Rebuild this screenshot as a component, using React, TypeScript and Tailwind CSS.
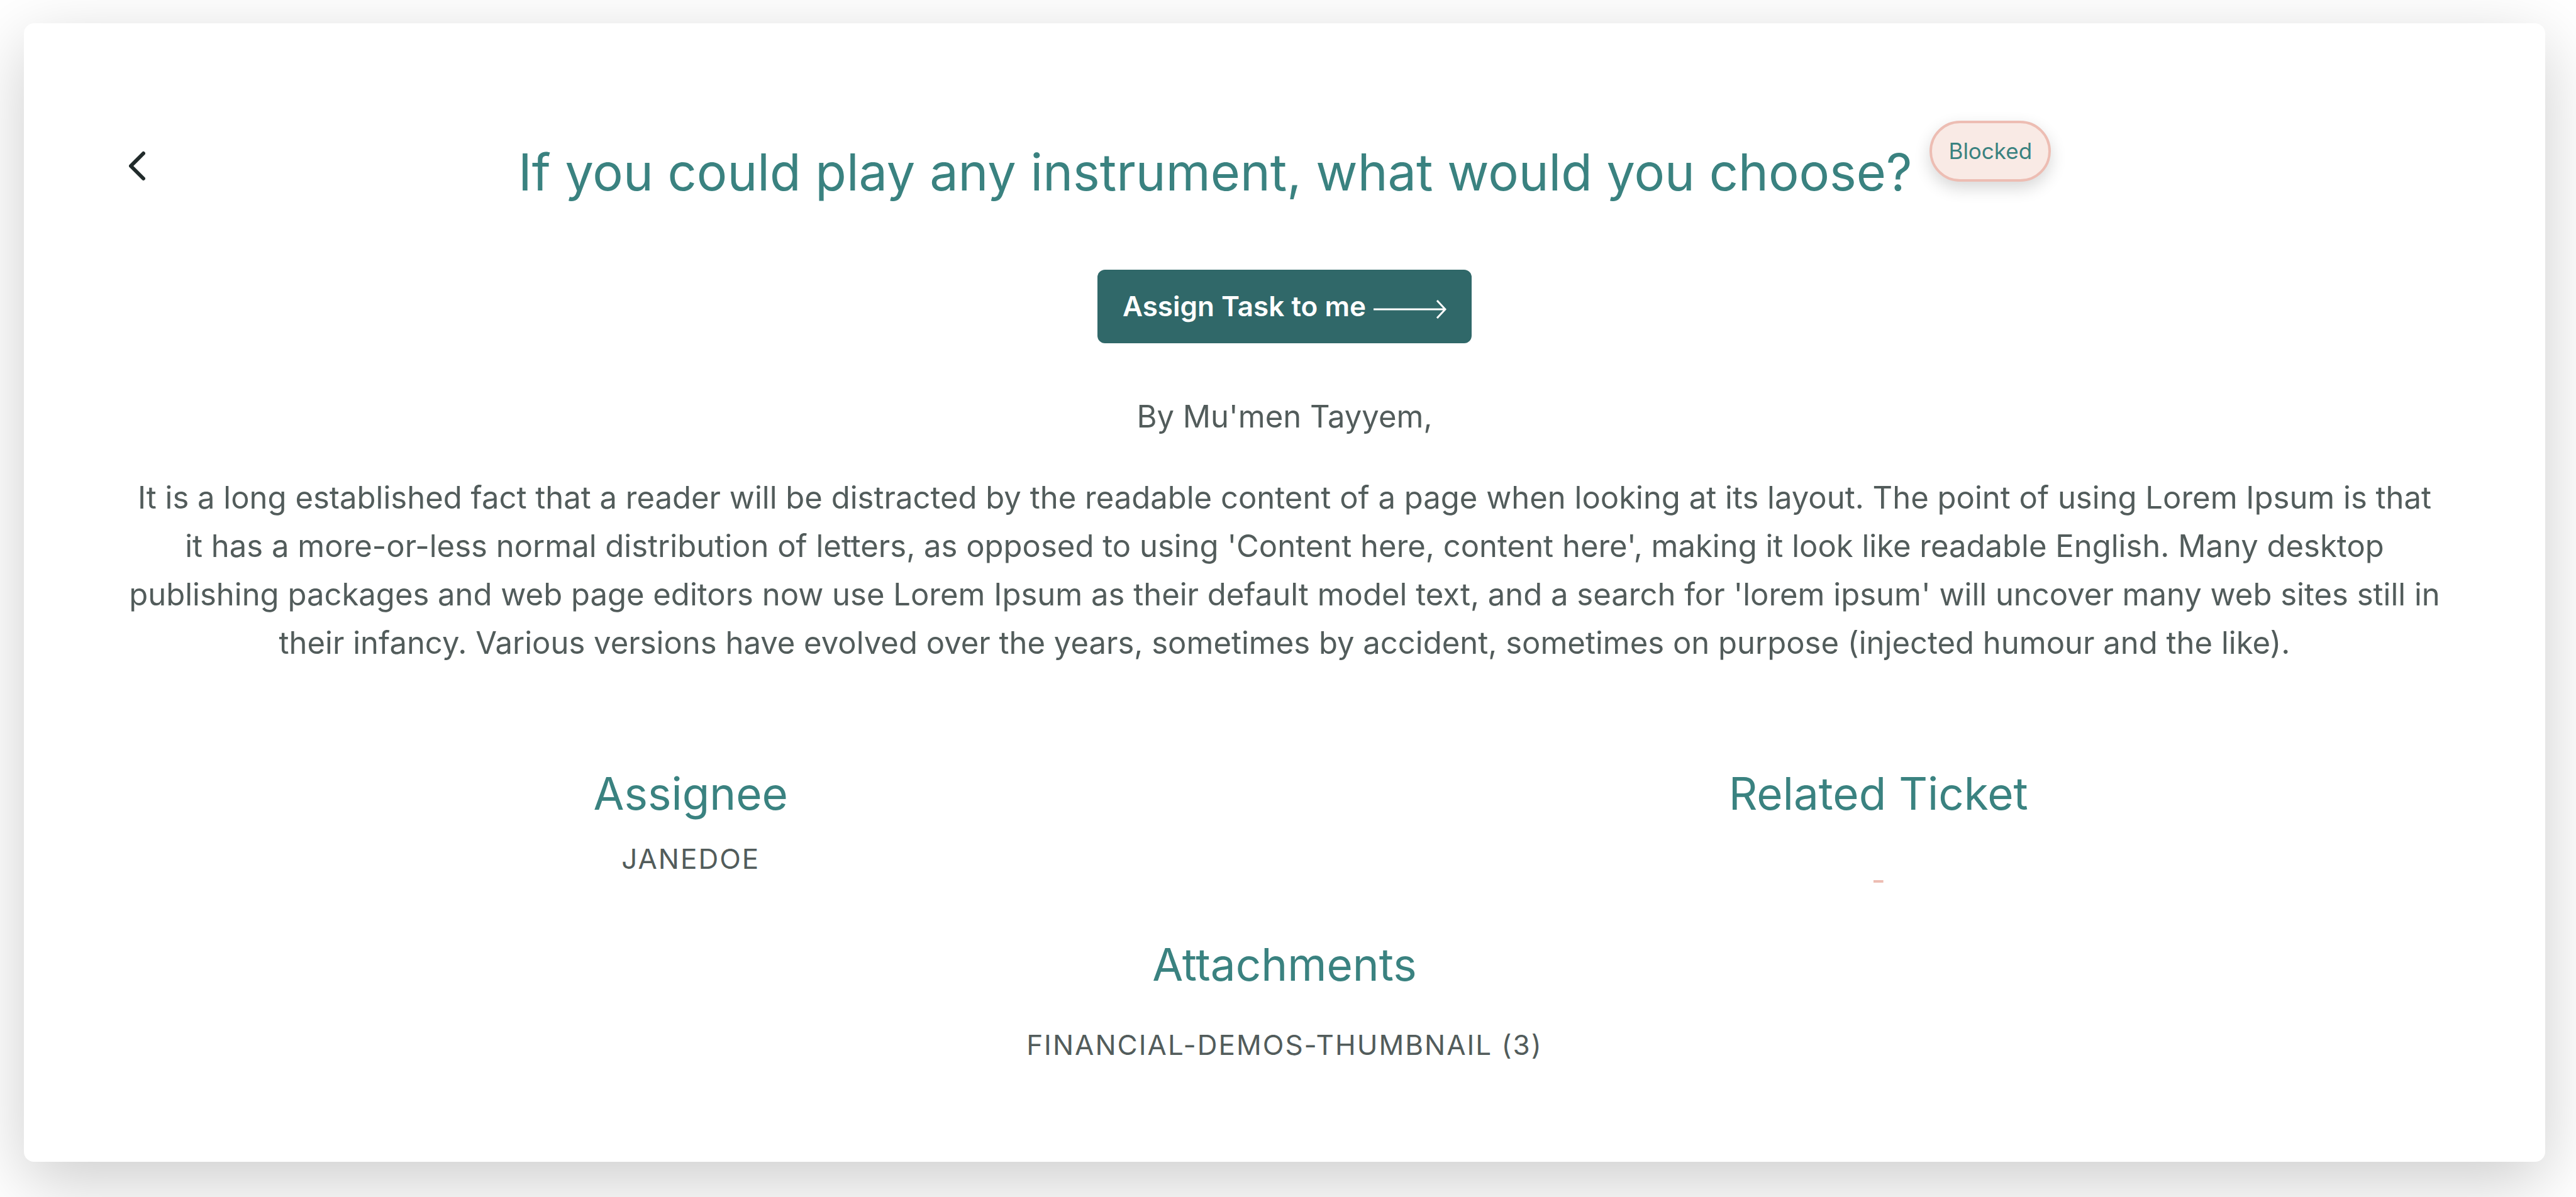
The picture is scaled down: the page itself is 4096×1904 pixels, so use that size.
import type { ReactNode } from "react";

function SectionHeading({ children }: { children: ReactNode }) {
  return (
    <h2 className="text-[71px] leading-[96px] font-normal text-[#3a8280]">
      {children}
    </h2>
  );
}

function ChevronLeft() {
  return (
    <svg viewBox="0 0 26 58" className="h-[58px] w-[26px]" fill="none" aria-hidden="true">
      <path
        d="M23 9 3 29l20 20"
        stroke="currentColor"
        strokeWidth="6"
        strokeLinecap="round"
        strokeLinejoin="round"
      />
    </svg>
  );
}

function LongArrow() {
  return (
    <svg viewBox="0 0 116 32" className="mt-2 h-8 w-[116px]" fill="none" aria-hidden="true">
      <path d="M0 16h114M101 2l13 14-13 14" stroke="currentColor" strokeWidth="3" />
    </svg>
  );
}

export default function App() {
  return (
    <div className="overflow-hidden bg-white pt-[37px] pr-[49px] pb-14 pl-[38px] font-['Inter',sans-serif] text-[#525c5b]">
      <main className="rounded-2xl bg-white px-[167px] pt-[155px] pb-[154px] text-center shadow-[0_32px_110px_rgba(0,0,0,0.2)]">
        <header className="flex items-start">
          <button type="button" aria-label="Back" className="mt-[43px] w-[26px] text-[#212b2b]">
            <ChevronLeft />
          </button>
          <div className="flex flex-1 items-start justify-center gap-7">
            <h1 className="mt-[26px] text-[81px] leading-[112px] font-normal text-[#3a8280]">
              If you could play any instrument, what would you choose?
            </h1>
            <span className="rounded-full border-4 border-[#edbdb3] bg-[#f9eae5] px-[26px] text-[35px] leading-[89px] text-[#3a8280] shadow-[0_10px_26px_rgba(0,0,0,0.16)]">
              Blocked
            </span>
          </div>
          <div className="w-[26px]" />
        </header>

        <button
          type="button"
          className="mt-[99px] inline-flex items-center gap-3 rounded-xl bg-[#306869] px-10 py-6 align-top text-[44px] leading-[69px] font-semibold text-white"
        >
          Assign Task to me
          <LongArrow />
        </button>

        <p className="mt-[78px] text-[49px] leading-[77px]">By Mu'men Tayyem,</p>

        <p className="mt-[52px] text-[49px] leading-[77px]">
          It is a long established fact that a reader will be distracted by the readable content of
          a page when looking at its layout. The point of using Lorem Ipsum is that it has a
          more-or-less normal distribution of letters, as opposed to using 'Content here, content
          here', making it look like readable English. Many desktop publishing packages and web page
          editors now use Lorem Ipsum as their default model text, and a search for 'lorem ipsum'
          will uncover many web sites still in their infancy. Various versions have evolved over the
          years, sometimes by accident, sometimes on purpose (injected humour and the like).
        </p>

        <div className="mt-[153px] grid grid-cols-2 gap-[102px]">
          <section>
            <SectionHeading>Assignee</SectionHeading>
            <p className="mt-6 text-[44px] leading-16 tracking-[2px] uppercase">janedoe</p>
          </section>
          <section>
            <SectionHeading>Related Ticket</SectionHeading>
            <p className="mt-[58px] text-[49px] leading-16 text-[#edbdb3]">-</p>
          </section>
        </div>

        <section className="mt-[54px]">
          <SectionHeading>Attachments</SectionHeading>
          <p className="mt-12 text-[44px] leading-16 tracking-[2px] uppercase">
            financial-demos-thumbnail (3)
          </p>
        </section>
      </main>
    </div>
  );
}
